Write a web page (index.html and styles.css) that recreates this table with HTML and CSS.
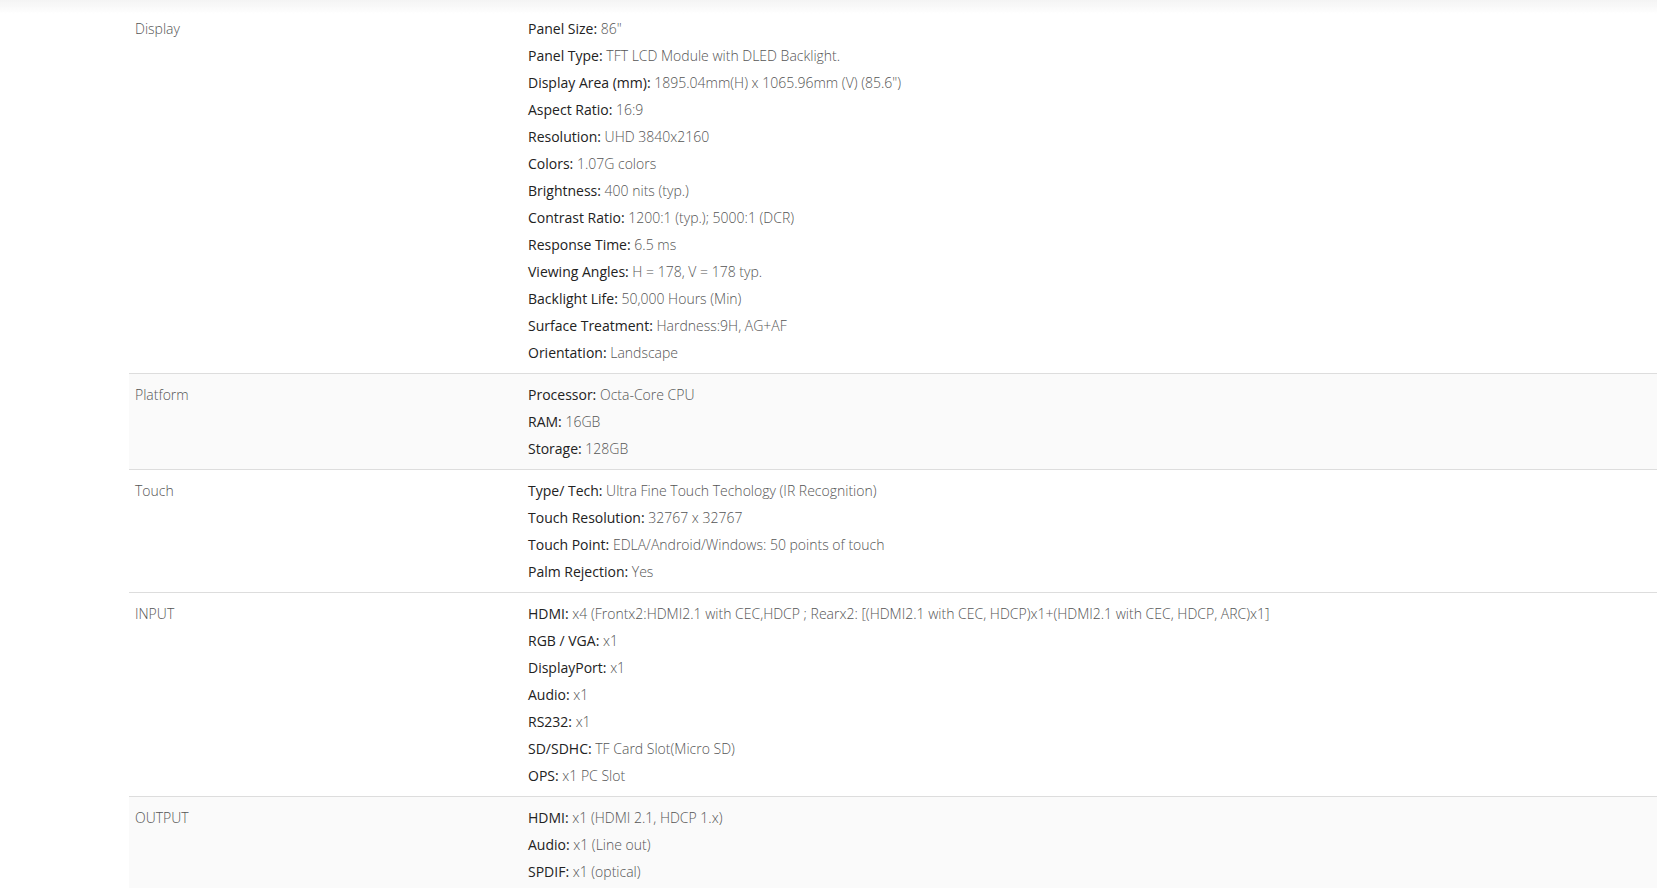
FILE: index.html
```html
<!DOCTYPE html>
<html lang="en">
<head>
<meta charset="utf-8">
<title>Specifications</title>
<link rel="stylesheet" href="styles.css">
</head>
<body>
<div class="top-shadow"></div>
<div class="specs">
  <div class="row">
    <div class="cat">Display</div>
    <div class="vals">
      <p><b>Panel Size:</b> 86"</p>
      <p><b>Panel Type:</b> TFT LCD Module with DLED Backlight.</p>
      <p><b>Display Area (mm):</b> 1895.04mm(H) x 1065.96mm (V) (85.6")</p>
      <p><b>Aspect Ratio:</b> 16:9</p>
      <p><b>Resolution:</b> UHD 3840x2160</p>
      <p><b>Colors:</b> 1.07G colors</p>
      <p><b>Brightness:</b> 400 nits (typ.)</p>
      <p><b>Contrast Ratio:</b> 1200:1 (typ.); 5000:1 (DCR)</p>
      <p><b>Response Time:</b> 6.5 ms</p>
      <p><b>Viewing Angles:</b> H = 178, V = 178 typ.</p>
      <p><b>Backlight Life:</b> 50,000 Hours (Min)</p>
      <p><b>Surface Treatment:</b> Hardness:9H, AG+AF</p>
      <p><b>Orientation:</b> Landscape</p>
    </div>
  </div>
  <div class="row alt">
    <div class="cat">Platform</div>
    <div class="vals">
      <p><b>Processor:</b> Octa-Core CPU</p>
      <p><b>RAM:</b> 16GB</p>
      <p><b>Storage:</b> 128GB</p>
    </div>
  </div>
  <div class="row">
    <div class="cat">Touch</div>
    <div class="vals">
      <p><b>Type/ Tech:</b> Ultra Fine Touch Techology (IR Recognition)</p>
      <p><b>Touch Resolution:</b> 32767 x 32767</p>
      <p><b>Touch Point:</b> EDLA/Android/Windows: 50 points of touch</p>
      <p><b>Palm Rejection:</b> Yes</p>
    </div>
  </div>
  <div class="row">
    <div class="cat">INPUT</div>
    <div class="vals">
      <p><b>HDMI:</b> x4 (Frontx2:HDMI2.1 with CEC,HDCP ; Rearx2: [(HDMI2.1 with CEC, HDCP)x1+(HDMI2.1 with CEC, HDCP, ARC)x1]</p>
      <p><b>RGB / VGA:</b> x1</p>
      <p><b>DisplayPort:</b> x1</p>
      <p><b>Audio:</b> x1</p>
      <p><b>RS232:</b> x1</p>
      <p><b>SD/SDHC:</b> TF Card Slot(Micro SD)</p>
      <p><b>OPS:</b> x1 PC Slot</p>
    </div>
  </div>
  <div class="row alt">
    <div class="cat">OUTPUT</div>
    <div class="vals">
      <p><b>HDMI:</b> x1 (HDMI 2.1, HDCP 1.x)</p>
      <p><b>Audio:</b> x1 (Line out)</p>
      <p><b>SPDIF:</b> x1 (optical)</p>
    </div>
  </div>
</div>
</body>
</html>
```

FILE: styles.css
```css
html, body {
  margin: 0;
  padding: 0;
  background: #ffffff;
}
body {
  font-family: "Open Sans", "Liberation Sans", sans-serif;
  font-size: 14px;
  color: #666;
  overflow: hidden;
}
.top-shadow {
  position: fixed;
  top: 0;
  left: 0;
  right: 0;
  height: 14px;
  background: linear-gradient(to bottom, #f4f4f4, rgba(255,255,255,0));
  pointer-events: none;
}
.specs {
  margin-left: 129px;
  padding-top: 8px;
}
.row {
  display: grid;
  grid-template-columns: 393px 1fr;
  border-bottom: 1px solid #dddddd;
}
.row.alt {
  background: #fafafa;
}
.cat {
  padding: 7px 6px;
  line-height: 27px;
  color: #555;
  font-weight: 300;
}
.vals {
  padding: 7px 6px;
}
.vals p {
  margin: 0;
  line-height: 27px;
  color: #555;
  font-weight: 300;
  white-space: nowrap;
}
.vals b {
  color: #222;
  font-weight: 400;
}
```
